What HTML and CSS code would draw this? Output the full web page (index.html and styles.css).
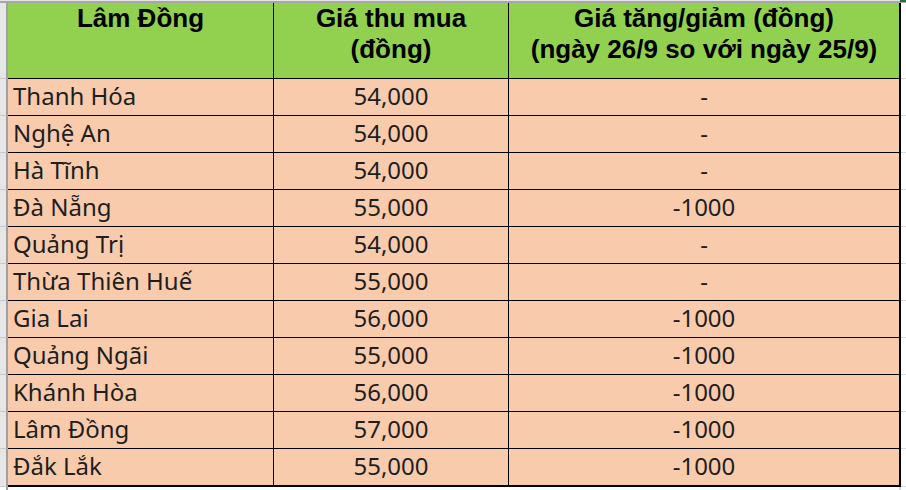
FILE: index.html
```html
<!DOCTYPE html>
<html lang="vi">
<head>
<meta charset="utf-8">
<title>Giá cà phê</title>
<link rel="stylesheet" href="styles.css">
</head>
<body>
<div class="sheet">
  <div class="topbar"><div class="topbar-right"></div></div>
  <div class="grid">
    <div class="rh hdr"></div>
    <div class="th c1">Lâm Đồng</div>
    <div class="th c2">Giá thu mua<br>(đồng)</div>
    <div class="th c3">Giá tăng/giảm (đồng)<br>(ngày 26/9 so với ngày 25/9)</div>
    <div class="out hdr"></div>

    <div class="rh"></div><div class="td c1 left">Thanh Hóa</div><div class="td c2">54,000</div><div class="td c3">-</div><div class="out"></div>
    <div class="rh"></div><div class="td c1 left">Nghệ An</div><div class="td c2">54,000</div><div class="td c3">-</div><div class="out"></div>
    <div class="rh"></div><div class="td c1 left">Hà Tĩnh</div><div class="td c2">54,000</div><div class="td c3">-</div><div class="out"></div>
    <div class="rh"></div><div class="td c1 left">Đà Nẵng</div><div class="td c2">55,000</div><div class="td c3">-1000</div><div class="out"></div>
    <div class="rh"></div><div class="td c1 left">Quảng Trị</div><div class="td c2">54,000</div><div class="td c3">-</div><div class="out"></div>
    <div class="rh"></div><div class="td c1 left">Thừa Thiên Huế</div><div class="td c2">55,000</div><div class="td c3">-</div><div class="out"></div>
    <div class="rh"></div><div class="td c1 left">Gia Lai</div><div class="td c2">56,000</div><div class="td c3">-1000</div><div class="out"></div>
    <div class="rh"></div><div class="td c1 left">Quảng Ngãi</div><div class="td c2">55,000</div><div class="td c3">-1000</div><div class="out"></div>
    <div class="rh"></div><div class="td c1 left">Khánh Hòa</div><div class="td c2">56,000</div><div class="td c3">-1000</div><div class="out"></div>
    <div class="rh"></div><div class="td c1 left">Lâm Đồng</div><div class="td c2">57,000</div><div class="td c3">-1000</div><div class="out"></div>
    <div class="rh last"></div><div class="td c1 left last">Đắk Lắk</div><div class="td c2 last">55,000</div><div class="td c3 last">-1000</div><div class="out last"></div>
    <div class="rh tail"></div><div class="tail"></div><div class="tail"></div><div class="tail c3t"></div><div class="tail"></div>
  </div>
</div>
</body>
</html>
```

FILE: styles.css
```css
* { box-sizing: border-box; }
html, body { margin: 0; padding: 0; background: #ffffff; }
.sheet { width: 906px; height: 490px; overflow: hidden; }

.topbar {
  height: 3px;
  border-top: 1px solid #e6e6e6;
  border-bottom: 2px solid #a6a6a6;
  display: flex;
  justify-content: flex-end;
}
.topbar-right { width: 6px; height: 2px; background: #217346; margin-top: -1px; }

.grid {
  display: grid;
  grid-template-columns: 8px 266px 235px 392px 5px;
  grid-template-rows: 76px repeat(10, 37px) 38px 10px;
}

.rh {
  background: #e6e6e6;
  border-right: 2px solid #a0a0a0;
  border-bottom: 1px solid #c8c8c8;
}
.rh.last { border-bottom: 1px solid #c8c8c8; }

.th {
  background: #92d050;
  font-family: "Liberation Sans", Arial, sans-serif;
  font-weight: bold;
  font-size: 26px;
  line-height: 31px;
  color: #000;
  text-align: center;
  border-bottom: 1px solid #000;
  border-right: 1px solid #000;
  white-space: nowrap;
}
.th.c3 { border-right-width: 2px; }

.td {
  background: #f8cbad;
  font-family: "Noto Sans", "Open Sans", sans-serif;
  font-size: 24px;
  line-height: 32px;
  color: #1e1e1e;
  text-align: center;
  padding-top: 1px;
  border-bottom: 1px solid #000;
  border-right: 1px solid #000;
  white-space: nowrap;
}
.td.c3 { border-right-width: 2px; }
.td.left { text-align: left; padding-left: 5px; }
.td.last { border-bottom-width: 2px; }

.out { background: #fff; border-bottom: 1px solid #d9d9d9; }
.out.hdr { border-bottom: 1px solid #d9d9d9; }

.tail { background: #fff; }
.rh.tail { border-bottom: none; }
.c3t { border-right: 2px solid #d4d4d4; }
```
